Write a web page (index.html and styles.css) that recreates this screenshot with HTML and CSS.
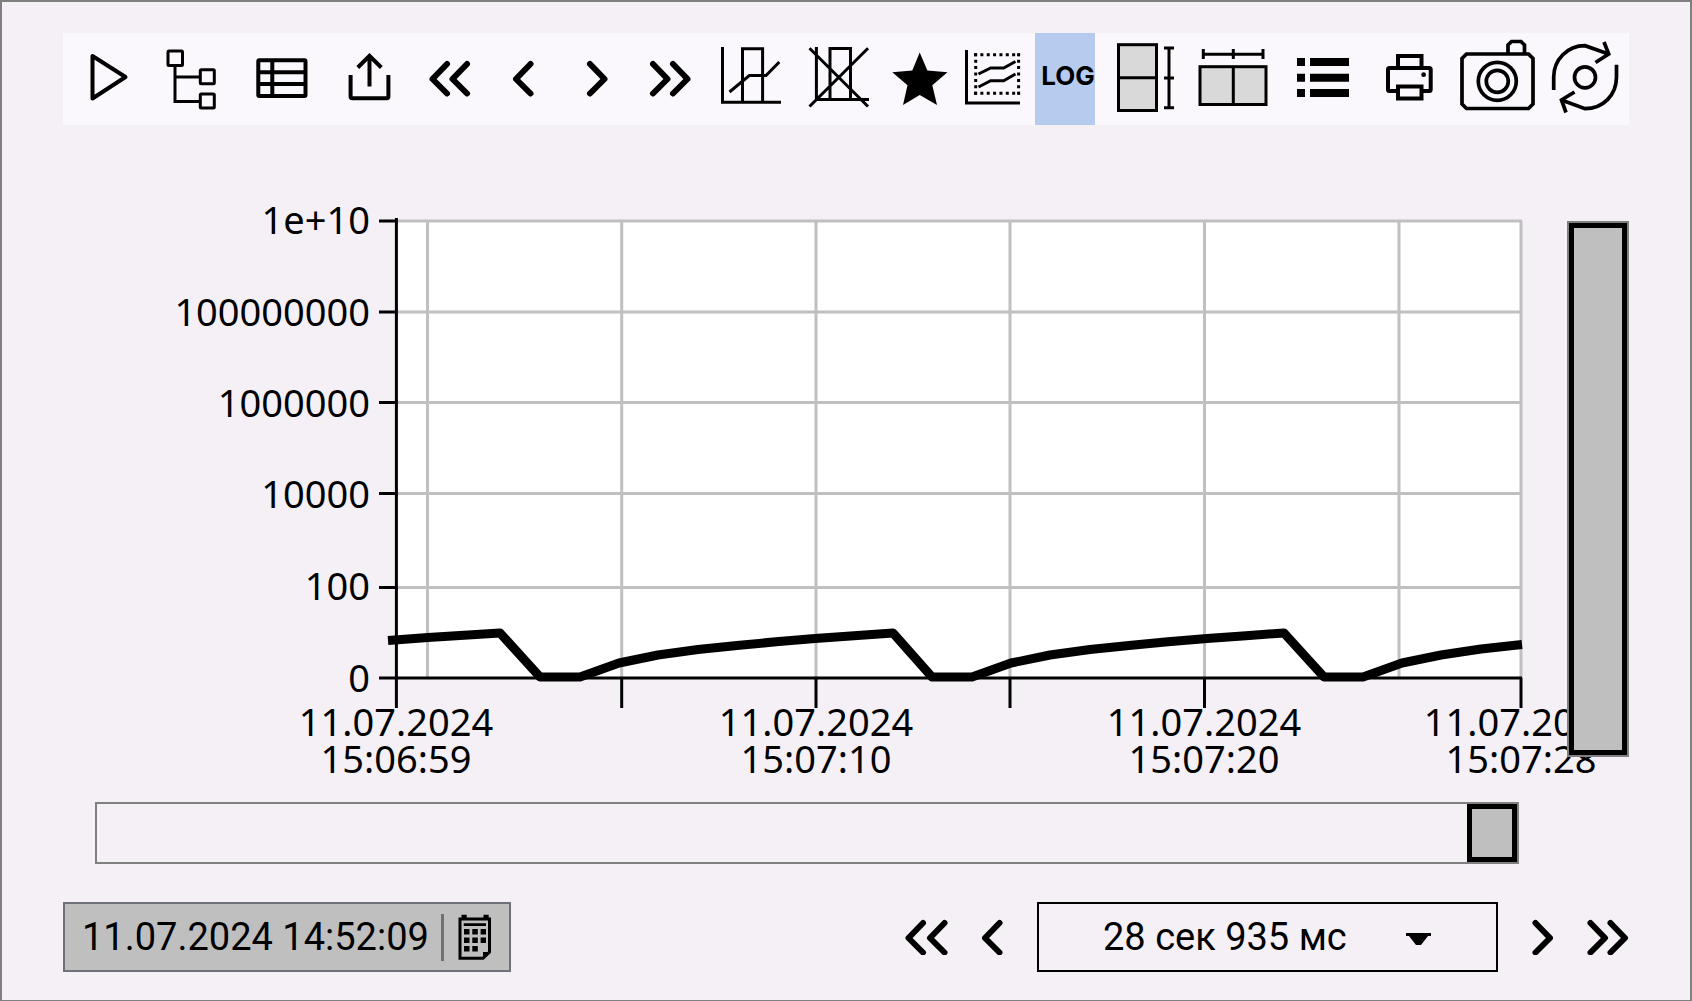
FILE: index.html
```html
<!DOCTYPE html>
<html lang="ru">
<head>
  <meta charset="UTF-8">
  <meta name="viewport" content="width=device-width,initial-scale=1">
  <title>Тренды</title>
  <link rel="stylesheet" href="styles.css">
</head>
<body>
  <div class="trend">
    <!-- toolbar: all icons share one coordinate strip, each svg shows its own cell -->
    <div class="toolbar">
      <button type="button" aria-label="Пуск">
        <svg viewBox="63 33 84 92"><path stroke-width="4" stroke-linejoin="round" d="M92.500 56V98.500L125.500 77Z"/></svg>
      </button>
      <button type="button" aria-label="Дерево">
        <svg viewBox="147 33 85 92" stroke-width="3">
          <rect x="168" y="51" width="14.500" height="14.500" rx="1"/>
          <path d="M175 67V101.500H199M175 77H199"/>
          <rect x="200.300" y="69.700" width="14" height="14" rx="1"/>
          <rect x="200.300" y="94" width="14" height="14" rx="1"/>
        </svg>
      </button>
      <button type="button" aria-label="Таблица">
        <svg viewBox="232 33 95 92" stroke-width="4"><rect x="258.300" y="60.300" width="47.200" height="35.800" rx="1"/><path d="M258 72.300H306M258 84H306M272.300 60V96"/></svg>
      </button>
      <button type="button" aria-label="Экспорт">
        <svg viewBox="327 33 87 92" stroke-width="4"><path d="M369.500 56V86.500M357.800 67.500L369.500 55.800L381.300 67.500M350.600 75V96.500Q350.600 98.300 352.400 98.300H386.600Q388.400 98.300 388.400 96.500V75"/></svg>
      </button>
      <button type="button" aria-label="Назад на экран">
        <svg class="arrow" viewBox="414 33 76 92"><path d="M447 64L432.500 79L447 93.500M467 64L452.500 79L467 93.500"/></svg>
      </button>
      <button type="button" aria-label="Назад">
        <svg class="arrow" viewBox="490 33 70 92"><path d="M530.500 64L516 79L530.500 93.500"/></svg>
      </button>
      <button type="button" aria-label="Вперёд">
        <svg class="arrow" viewBox="560 33 70 92"><path d="M590 64L604.500 79L590 93.500"/></svg>
      </button>
      <button type="button" aria-label="Вперёд на экран">
        <svg class="arrow" viewBox="630 33 76 92"><path d="M653 64L667.500 79L653 93.500M673 64L687.500 79L673 93.500"/></svg>
      </button>
      <button type="button" aria-label="Визир">
        <svg viewBox="706 33 89 92" stroke-width="3"><path d="M722.500 47V102.300H781M742.500 102V48.700H762.600V102M729.500 92L749.300 75.500H766L779.300 62"/></svg>
      </button>
      <button type="button" aria-label="Убрать визир">
        <svg viewBox="795 33 86 92" stroke-width="3"><path d="M816.400 47V99.500H869M830 99V48.500H850.500V99M809.500 48.300L868 106.500M868 48.300L809.500 106.500"/></svg>
      </button>
      <button type="button" aria-label="Избранное">
        <svg viewBox="881 33 76 92"><path class="solid" d="M919.700 52.500L927.400 70.500L947.500 72.300L932.300 85.300L937 105L919.700 95L903 105L907.500 85.300L892.300 72.300L912.300 70.500Z"/></svg>
      </button>
      <button type="button" aria-label="Тренды">
        <svg viewBox="957 33 78 92" stroke-width="3">
          <path d="M966.500 50V103H1020M978.500 74L990.700 68H1003.700L1015.500 61.500M978.500 87L990.700 80.700H1003.700L1015.500 74"/>
          <path stroke-dasharray="3 3.360" d="M974 54.700H1020M974 93.300H1020"/>
          <path stroke-dasharray="3 3.430" d="M975.700 53.200V95M1018.600 53.200V95"/>
        </svg>
      </button>
      <button type="button" class="log" aria-pressed="true">LOG</button>
      <button type="button" aria-label="Масштаб по вертикали">
        <svg viewBox="1095 33 91 92" stroke-width="3"><rect class="pane" x="1118.500" y="44.700" width="38" height="65.800"/><path d="M1118 77.700H1157M1169 48V108M1164 48H1174M1164 78H1174M1164 107.700H1174"/></svg>
      </button>
      <button type="button" aria-label="Масштаб по горизонтали">
        <svg viewBox="1186 33 97 92" stroke-width="3"><rect class="pane" x="1200" y="66.700" width="66" height="37.800"/><path d="M1233.300 67V104M1203.300 54.200H1263M1203.300 49V59M1233.300 49V59M1263 49V59"/></svg>
      </button>
      <button type="button" aria-label="Легенда">
        <svg viewBox="1283 33 84 92" stroke-width="8"><path d="M1297 62H1305M1310 62H1349M1297 77.700H1305M1310 77.700H1349M1297 93H1305M1310 93H1349"/></svg>
      </button>
      <button type="button" aria-label="Печать">
        <svg viewBox="1367 33 80 92" stroke-width="4"><path d="M1398 68V56H1421.500V68"/><rect x="1388" y="68" width="42.700" height="23" rx="1.500"/><rect class="paper" x="1398" y="86.500" width="23.500" height="12"/><circle class="solid" cx="1423.600" cy="74.700" r="2.400"/></svg>
      </button>
      <button type="button" aria-label="Снимок">
        <svg viewBox="1447 33 96 92" stroke-width="3.700"><path d="M1466.500 54H1528.500L1533 58.500V104L1528.500 108.500H1466.500L1462 104V58.500ZM1508 54V45L1511.500 41.500H1521L1524.500 45V54"/><circle cx="1497.300" cy="81.300" r="19"/><circle cx="1497.300" cy="81.300" r="11"/></svg>
      </button>
      <button type="button" aria-label="Обновить">
        <svg viewBox="1543 33 86 92" stroke-width="3.700"><circle cx="1585" cy="77.300" r="10.500"/><path d="M1553.700 90V77C1553.700 60 1567 45.700 1585 45.700L1608.500 54M1604 42L1608.700 54L1595.500 62.500M1616.500 64.700V77C1616.500 95 1603 108.700 1585 108.700L1561.500 100M1566 112.500L1561.500 100L1574.500 92"/></svg>
      </button>
    </div>

    <div class="plot-row">
      <svg class="plot" viewBox="63 190 1503 590" role="img" aria-label="График">
        <rect class="field" x="396" y="221" width="1125" height="457"/>
        <path class="grid" d="M396 221H1522M396 312H1521M396 402.500H1521M396 493.500H1521M396 587.500H1521M427.500 221V678M621.700 221V678M816 221V678M1010 221V678M1204.500 221V678M1399 221V678M1521 221V678"/>
        <path class="axis" d="M396.400 218V708M379 678H1522M379 221H396M379 312H396M379 402.500H396M379 493.500H396M379 587.500H396M621.700 678V708M816 678V708M1010 678V708M1204.500 678V708M1521 678V708"/>
        <polyline class="series" points="388,640.500 428,637.500 500,633 540,677 580,677 619,663 658,655 698,649.500 737,645.500 776,641.800 815,638.500 854,635.700 893,633 932,677 972,677 1011,663 1050,655 1090,649.500 1129,645.500 1168,641.800 1207,638.500 1246,635.700 1284,633 1324,677 1363,677 1402,663 1441,655 1481,649 1522,644.500"/>
        <g class="y-labels">
          <text x="370" y="234">1e+10</text>
          <text x="370" y="326">100000000</text>
          <text x="370" y="417">1000000</text>
          <text x="370" y="508">10000</text>
          <text x="370" y="600">100</text>
          <text x="370" y="692">0</text>
        </g>
        <g class="x-labels">
          <text x="396" y="736">11.07.2024</text><text x="396" y="773">15:06:59</text>
          <text x="816" y="736">11.07.2024</text><text x="816" y="773">15:07:10</text>
          <text x="1204" y="736">11.07.2024</text><text x="1204" y="773">15:07:20</text>
          <text x="1521" y="736">11.07.2024</text><text x="1521" y="773">15:07:28</text>
        </g>
      </svg>
      <input class="scroll-y" type="range" min="0" max="100" value="0" aria-label="Прокрутка по вертикали">
    </div>

    <input class="scroll-x" type="range" min="0" max="100" value="100" aria-label="Прокрутка по времени">

    <div class="footer">
      <div class="date">
        <input type="text" value="11.07.2024 14:52:09" aria-label="Начало интервала">
        <button type="button" aria-label="Календарь">
          <svg viewBox="451 914 36 47" width="36" height="47" stroke-width="3">
            <path d="M454 919H483.500V952L477 958.300H454Z"/>
            <path class="solid" d="M455.500 914.700H460.700V918H455.500ZM477.500 914.700H482.700V918H477.500ZM477 959V952H485ZM457.700 923.300H480V926H457.700Z"/>
            <path stroke-width="5.500" stroke-dasharray="5.500 2.800" d="M458 931.700H480M458 940.200H480M458 948.700H472"/>
          </svg>
        </button>
      </div>
      <div class="span">
        <button type="button" aria-label="Назад на интервал"><svg class="arrow" viewBox="0 0 43 36" width="43" height="36"><path d="M18 4L3.500 19L18 33.500M39.500 4L25 19L39.500 33.500"/></svg></button>
        <button type="button" aria-label="Шаг назад"><svg class="arrow" viewBox="0 0 21 36" width="21" height="36"><path d="M17.500 4L3 19L17.500 33.500"/></svg></button>
        <div class="select">
          <select aria-label="Длительность"><option>28 сек 935 мс</option></select>
          <svg viewBox="0 0 25 12" width="25" height="12"><path class="solid" d="M0 0H25V3H22L15 12H10L3 3H0Z"/></svg>
        </div>
        <button type="button" aria-label="Шаг вперёд"><svg class="arrow" viewBox="0 0 21 36" width="21" height="36"><path d="M3.500 4L18 19L3.500 33.500"/></svg></button>
        <button type="button" aria-label="Вперёд на интервал"><svg class="arrow" viewBox="0 0 42 36" width="42" height="36"><path d="M3.500 4L18 19L3.500 33.500M23.500 4L38 19L23.500 33.500"/></svg></button>
      </div>
    </div>
  </div>
</body>
</html>
```
FILE: styles.css
```css
*{
  box-sizing:border-box;
}
body{
  margin:0;
  font-family:Roboto,"Liberation Sans",sans-serif;
  color:#000;
  background:#f4f0f6;
}
button,input,select{
  margin:0;
  padding:0;
  border:0;
  border-radius:0;
  background:none;
  color:inherit;
  font:inherit;
  -webkit-appearance:none;
  appearance:none;
}
button{
  cursor:pointer;
}
svg{
  display:block;
  fill:none;
  stroke:#000;
}
.trend{
  min-height:100vh;
  padding:31px 61px 27px;
  border:2px solid #808080;
  border-bottom-width:1px;
}

/* toolbar */
.toolbar{
  display:grid;
  grid-template-columns:84fr 85fr 95fr 87fr 76fr 70fr 70fr 76fr 89fr 86fr 76fr 78fr 60fr 91fr 97fr 84fr 80fr 96fr 86fr;
  height:92px;
  background:#faf8fc;
}
.toolbar button{
  min-width:0;
}
.toolbar svg{
  width:100%;
  height:92px;
}
.toolbar .log{
  padding:0 0 7px 6px;
  background:#b7cbef;
  font:bold 26px Inter,sans-serif;
}
.solid{
  fill:#000;
  stroke:none;
}
.pane{
  fill:#d9d9d9;
}
.paper{
  fill:#faf8fc;
}
.arrow{
  stroke-width:6;
  stroke-linecap:round;
  stroke-linejoin:round;
}

/* chart */
.plot-row{
  display:flex;
  margin-top:65px;
}
.plot{
  flex:1;
  min-width:0;
  overflow:visible;
}
.field{
  fill:#fff;
  stroke:none;
}
.grid{
  stroke:#c0c0c0;
  stroke-width:3;
}
.axis{
  stroke-width:3;
}
.series{
  stroke-width:9;
  stroke-linejoin:round;
}
.plot text{
  fill:#000;
  stroke:none;
  font:38px "Noto Sans","Open Sans",sans-serif;
}
.y-labels{
  text-anchor:end;
}
.x-labels{
  text-anchor:middle;
}

/* scrollbars */
.scroll-x,
.scroll-y{
  display:block;
  border:2px solid #808080;
}
.scroll-y{
  position:relative;
  width:62px;
  height:536px;
  margin-left:1px;
  margin-top:31px;
  background:#bfbfbf;
  writing-mode:vertical-lr;
}
.scroll-x{
  width:calc(100% - 142px);
  height:62px;
  margin:22px 0 0 32px;
}
.scroll-x::-webkit-slider-thumb,
.scroll-y::-webkit-slider-thumb{
  -webkit-appearance:none;
  background:#bfbfbf;
  border:5px solid #000;
  border-radius:0;
}
.scroll-x::-webkit-slider-thumb{
  width:50px;
  height:58px;
}
.scroll-y::-webkit-slider-thumb{
  width:58px;
  height:532px;
}

/* bottom row */
.footer{
  display:flex;
  justify-content:space-between;
  margin-top:38px;
  font-size:38px;
}
.date{
  display:flex;
  align-items:center;
  width:448px;
  height:70px;
  padding:0 16px 0 17px;
  border:2px solid #6d7178;
  background:#bfbfbf;
}
.date input{
  flex:1;
  min-width:0;
}
.date button{
  padding-left:13px;
  border-left:3px solid #6d7178;
}
.span{
  display:flex;
  align-items:center;
  gap:34px;
}
.select{
  position:relative;
  width:461px;
}
.select select{
  display:block;
  width:100%;
  height:70px;
  padding-left:64px;
  border:2px solid #000;
}
.select svg{
  position:absolute;
  right:67px;
  top:31px;
  pointer-events:none;
}
```
